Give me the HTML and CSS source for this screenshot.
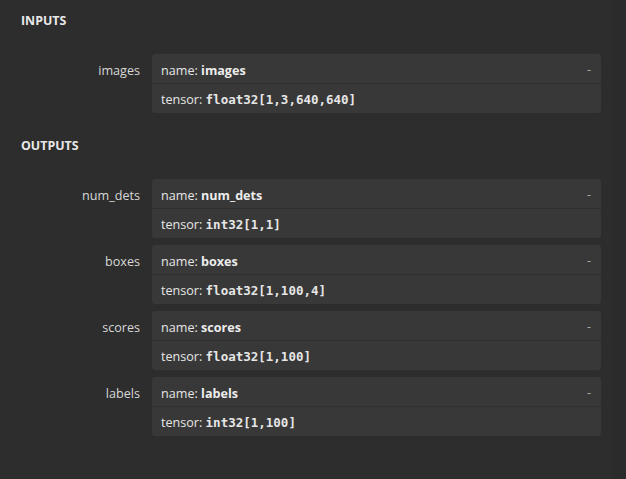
FILE: index.html
```html
<!DOCTYPE html>
<html>
<head>
<meta charset="utf-8">
<link rel="stylesheet" href="styles.css">
</head>
<body>
<div class="panel">
  <section class="section">
    <div class="section-title">INPUTS</div>
    <div class="items">
      <div class="item">
        <div class="item-name">images</div>
        <div class="card">
          <div class="row first"><span>name: <b>images</b></span><span class="toggle">-</span></div>
          <div class="row">tensor:&nbsp;<code>float32[1,3,640,640]</code></div>
        </div>
      </div>
    </div>
  </section>
  <section class="section">
    <div class="section-title">OUTPUTS</div>
    <div class="items">
      <div class="item">
        <div class="item-name">num_dets</div>
        <div class="card">
          <div class="row first"><span>name: <b>num_dets</b></span><span class="toggle">-</span></div>
          <div class="row">tensor:&nbsp;<code>int32[1,1]</code></div>
        </div>
      </div>
      <div class="item">
        <div class="item-name">boxes</div>
        <div class="card">
          <div class="row first"><span>name: <b>boxes</b></span><span class="toggle">-</span></div>
          <div class="row">tensor:&nbsp;<code>float32[1,100,4]</code></div>
        </div>
      </div>
      <div class="item">
        <div class="item-name">scores</div>
        <div class="card">
          <div class="row first"><span>name: <b>scores</b></span><span class="toggle">-</span></div>
          <div class="row">tensor:&nbsp;<code>float32[1,100]</code></div>
        </div>
      </div>
      <div class="item">
        <div class="item-name">labels</div>
        <div class="card">
          <div class="row first"><span>name: <b>labels</b></span><span class="toggle">-</span></div>
          <div class="row">tensor:&nbsp;<code>int32[1,100]</code></div>
        </div>
      </div>
    </div>
  </section>
</div>
<div class="scrollbar"></div>
</body>
</html>
```
FILE: styles.css
```css
html, body {
  margin: 0;
  padding: 0;
  height: 100%;
  background: #2d2d2d;
  overflow: hidden;
}
body {
  display: flex;
  font-family: "Open Sans", "Noto Sans", sans-serif;
  font-size: 12.6px;
  color: #e6e6e6;
}
.panel {
  flex: 1;
  padding: 12px 11px 0 21px;
  display: flex;
  flex-direction: column;
  gap: 24px;
}
.scrollbar {
  width: 14px;
  background: #2b2b2b;
}
.section-title {
  font-weight: 700;
  font-size: 12.4px;
  line-height: 18px;
  height: 18px;
  margin-bottom: 24px;
  color: #e8e8e8;
}
.items {
  display: flex;
  flex-direction: column;
  gap: 7px;
}
.item {
  display: grid;
  grid-template-columns: 119px 449px;
  column-gap: 12px;
}
.item-name {
  text-align: right;
  line-height: 29px;
  padding-top: 2px;
  color: #d8d8d8;
}
.card {
  background: #383838;
  border-radius: 3px;
  height: 59px;
  display: flex;
  flex-direction: column;
}
.row {
  height: 29px;
  display: flex;
  align-items: center;
  padding: 2px 9px 0;
  box-sizing: border-box;
}
.row.first {
  justify-content: space-between;
  border-bottom: 1px solid #303030;
  height: 30px;
  padding-top: 4px;
}
.row b {
  font-weight: 700;
  color: #ececec;
}
.row code {
  font-family: "DejaVu Sans Mono", "Liberation Mono", monospace;
  font-size: 12.5px;
  font-weight: 700;
  color: #e6e6e6;
}
.toggle {
  color: #a8a8a8;
  padding-right: 1px;
  margin-top: -2px;
}
```
